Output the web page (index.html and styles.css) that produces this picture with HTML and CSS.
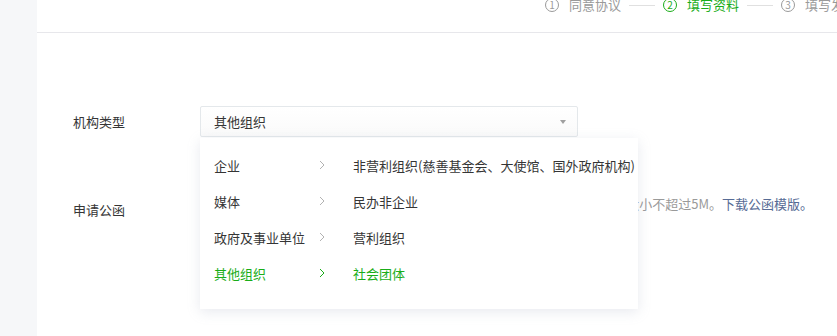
FILE: index.html
```html
<!DOCTYPE html>
<html lang="zh-CN">
<head>
    <meta charset="UTF-8">
    <title>填写资料</title>
    <link rel="stylesheet" href="styles.css">
</head>
<body>
    <div class="page">
        <div class="sidebar"></div>
        <div class="main">
            <!-- 步骤条 -->
            <div class="steps">
                <div class="steps-inner">
                    <div class="step"><span class="step-num">1</span>同意协议</div>
                    <span class="step-line"></span>
                    <div class="step active"><span class="step-num">2</span>填写资料</div>
                    <span class="step-line"></span>
                    <div class="step"><span class="step-num">3</span>填写发票信息</div>
                </div>
            </div>

            <div class="form">
                <div class="form-row">
                    <label class="form-label">机构类型</label>
                    <div class="select-wrap">
                        <div class="select">
                            <span>其他组织</span>
                            <i class="select-arrow"></i>
                        </div>

                        <!-- 级联下拉 -->
                        <div class="cascader">
                            <ul class="cascader-col">
                                <li>企业<svg class="chevron" viewBox="0 0 6 10"><polyline points="1,1 5,5 1,9"/></svg></li>
                                <li>媒体<svg class="chevron" viewBox="0 0 6 10"><polyline points="1,1 5,5 1,9"/></svg></li>
                                <li>政府及事业单位<svg class="chevron" viewBox="0 0 6 10"><polyline points="1,1 5,5 1,9"/></svg></li>
                                <li class="selected">其他组织<svg class="chevron" viewBox="0 0 6 10"><polyline points="1,1 5,5 1,9"/></svg></li>
                            </ul>
                            <ul class="cascader-col sub">
                                <li>非营利组织(慈善基金会、大使馆、国外政府机构)</li>
                                <li>民办非企业</li>
                                <li>营利组织</li>
                                <li class="selected">社会团体</li>
                            </ul>
                        </div>
                    </div>
                </div>

                <div class="form-row row-letter">
                    <label class="form-label">申请公函</label>
                    <div class="tips">请上传加盖公章的申请公函，支持jpg、png格式，大小不超过5M。<a href="#" class="link">下载公函模版。</a></div>
                </div>
            </div>
        </div>
    </div>
</body>
</html>
```

FILE: styles.css
```css
body {
    margin: 0;
    font-family: "Noto Sans CJK SC", "Noto Sans", sans-serif;
    font-size: 13px;
    color: #353535;
    background: #fff;
}
ul {
    margin: 0;
    padding: 0;
    list-style: none;
}
.page {
    display: flex;
    height: 336px;
    overflow: hidden;
}
.sidebar {
    width: 37px;
    flex-shrink: 0;
    background: #f6f7f9;
}
.main {
    flex: 1;
    overflow: hidden;
}

/* 步骤条 */
.steps {
    display: flex;
    align-items: flex-start;
    height: 33px;
    padding-left: 508px;
    border-bottom: 1px solid #e7e7eb;
    white-space: nowrap;
    box-sizing: border-box;
}
.steps-inner {
    display: flex;
    align-items: center;
    flex-shrink: 0;
    height: 20px;
    margin-top: -5px;
}
.steps-inner > * {
    flex-shrink: 0;
}
.step {
    display: flex;
    align-items: center;
    color: #9a9a9a;
    line-height: 20px;
}
.step.active {
    color: #1aad19;
}
.step-num {
    display: inline-flex;
    align-items: center;
    justify-content: center;
    width: 12px;
    height: 12px;
    margin-right: 10px;
    border: 1px solid currentColor;
    border-radius: 50%;
    font-size: 10px;
    line-height: 1;
}
.step-line {
    width: 26px;
    height: 1px;
    margin: 0 8px;
    background: #e0e0e0;
}

/* 表单 */
.form {
    padding: 73px 0 0 36px;
}
.form-row {
    display: flex;
    align-items: center;
}
.form-label {
    width: 127px;
    flex-shrink: 0;
}
.select-wrap {
    position: relative;
}
.select {
    display: flex;
    align-items: center;
    justify-content: space-between;
    width: 378px;
    height: 31px;
    padding: 0 11px 0 13px;
    border: 1px solid #e4e8eb;
    border-radius: 2px;
    background: linear-gradient(#fff, #fafafa);
    box-sizing: border-box;
}
.select-arrow {
    width: 0;
    height: 0;
    border-left: 3px solid transparent;
    border-right: 3px solid transparent;
    border-top: 4px solid #a0a0a0;
}

/* 级联下拉 */
.cascader {
    position: absolute;
    top: 32px;
    left: 0;
    z-index: 10;
    display: flex;
    padding: 9px 0 18px;
    background: #fff;
    box-shadow: 0 3px 12px rgba(150, 160, 180, 0.22);
    white-space: nowrap;
}
.cascader-col li {
    display: flex;
    align-items: center;
    height: 36px;
}
.cascader-col:first-child {
    width: 140px;
}
.cascader-col:first-child li {
    justify-content: space-between;
    padding: 0 15px 0 14px;
}
.cascader-col.sub {
    padding: 0 3px 0 13px;
}
.cascader-col .selected {
    color: #1aad19;
}
.chevron {
    width: 6px;
    height: 10px;
    fill: none;
    stroke: #b2b2b2;
    stroke-width: 1;
}
.selected .chevron {
    stroke: #1aad19;
}

.row-letter {
    margin-top: 57px;
    align-items: flex-start;
}
.row-letter .form-label {
    margin-top: 6px;
}
.tips {
    width: 613px;
    text-align: right;
    color: #9a9a9a;
    white-space: nowrap;
    overflow: hidden;
}
.link {
    color: #576b95;
    text-decoration: none;
}
```
